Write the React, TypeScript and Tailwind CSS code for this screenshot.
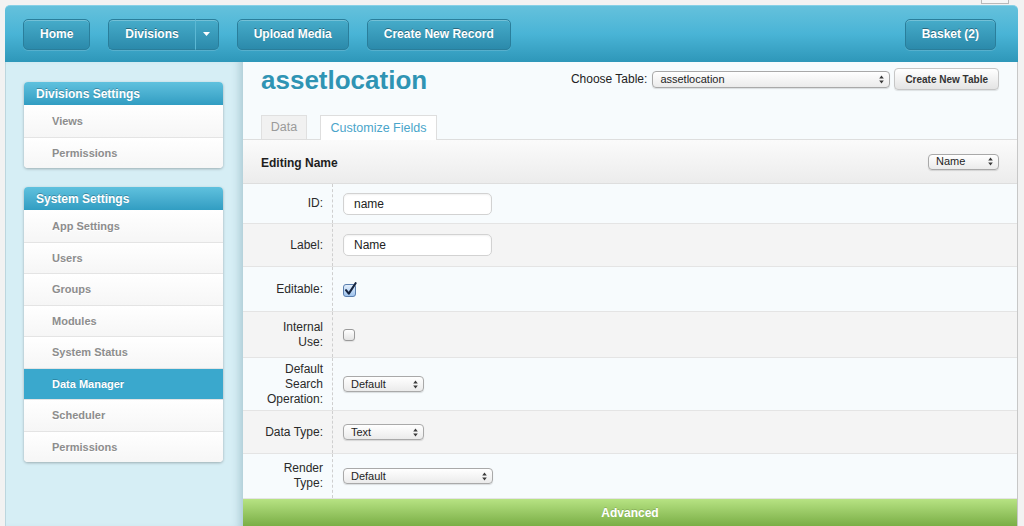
const sideGroups = [
  { title: "Divisions Settings", items: ["Views", "Permissions"] },
  {
    title: "System Settings",
    items: [
      "App Settings",
      "Users",
      "Groups",
      "Modules",
      "System Status",
      "Data Manager",
      "Scheduler",
      "Permissions",
    ],
  },
];

const btnBase =
  "flex h-[31px] items-center border border-[#2a7e9b] bg-linear-to-b from-[#46acca] to-[#2b8aab] text-[12px] font-bold text-white [text-shadow:0_-1px_0_rgba(0,0,0,0.35)] shadow-[inset_0_1px_0_rgba(255,255,255,0.25),0_1px_0_rgba(255,255,255,0.15)]";
const headerBtn = btnBase + " rounded-[5px] px-4";

function Arrows() {
  return (
    <svg width="5" height="9" viewBox="0 0 5 9">
      <path d="M2.5 0.5L4.8 3.6H0.2z M0.2 5.4H4.8L2.5 8.5z" fill="#3a3a3a" />
    </svg>
  );
}

function FakeSelect({ value, className }: { value: string; className: string }) {
  return (
    <div
      className={
        "flex items-center justify-between rounded-[4px] border border-[#a9a9a9] bg-linear-to-b from-white to-[#ebebeb] pl-[7px] pr-[5px] text-[11px] text-[#1e1e1e] shadow-[0_1px_1px_rgba(0,0,0,0.12)] " +
        className
      }
    >
      <span className="leading-none">{value}</span>
      <Arrows />
    </div>
  );
}

function TextBox({ value }: { value: string }) {
  return (
    <div className="flex h-[22px] w-[149px] items-center rounded-[5px] border border-[#d2d2d2] bg-white pl-[10px] text-[12px] text-[#222] shadow-[inset_0_1px_2px_rgba(0,0,0,0.06)]">
      {value}
    </div>
  );
}

function CheckedBox() {
  return (
    <svg width="15" height="15" viewBox="0 0 15 15">
      <defs>
        <linearGradient id="cbFill" x1="0" y1="0" x2="0" y2="1">
          <stop offset="0" stopColor="#e6f1fd" />
          <stop offset="1" stopColor="#9cc1ec" />
        </linearGradient>
      </defs>
      <rect x="0.5" y="2.5" width="12" height="12" rx="2.5" fill="url(#cbFill)" stroke="#5b7fae" />
      <path d="M3 8.2L5.8 11.6L12.6 1.2" stroke="#15243f" strokeWidth="2.1" fill="none" strokeLinecap="round" strokeLinejoin="round" />
    </svg>
  );
}

function EmptyBox() {
  return (
    <div className="h-[12px] w-[12px] rounded-[3px] border border-[#9a9a9a] bg-linear-to-b from-white to-[#e4e4e4] shadow-[0_1px_1px_rgba(0,0,0,0.08)]" />
  );
}

const rows = [
  { label: "ID:", h: "h-[40px]", bg: "bg-[#f7fbfd]", field: <TextBox value="name" /> },
  { label: "Label:", h: "h-[43px]", bg: "bg-[#f4f4f4]", field: <TextBox value="Name" /> },
  { label: "Editable:", h: "h-[45px]", bg: "bg-[#f7fbfd]", field: <CheckedBox /> },
  { label: "Internal Use:", h: "h-[46px]", bg: "bg-[#f4f4f4]", field: <EmptyBox /> },
  {
    label: "Default Search Operation:",
    h: "h-[53px]",
    bg: "bg-[#f7fbfd]",
    field: <FakeSelect value="Default" className="h-[16px] w-[81px]" />,
  },
  {
    label: "Data Type:",
    h: "h-[43px]",
    bg: "bg-[#f4f4f4]",
    field: <FakeSelect value="Text" className="h-[16px] w-[81px]" />,
  },
  {
    label: "Render Type:",
    h: "h-[45px]",
    bg: "bg-[#f7fbfd]",
    field: <FakeSelect value="Default" className="h-[16px] w-[150px]" />,
  },
];

export default function App() {
  return (
    <div className="h-[526px] overflow-hidden bg-[#f2f2f2] font-['Liberation_Sans',Arial,sans-serif]">
      <div className="flex h-[5px] justify-end pr-[15px]">
        <div className="h-[4px] w-[28px] border border-t-0 border-[#b9b9b9] bg-[#f7f7f7]" />
      </div>

      <div className="ml-[5px] flex h-[521px] w-[1013px] flex-col">
        {/* top bar */}
        <header className="flex h-[57px] items-center justify-between rounded-t-[5px] border-t border-[#86d0e6] bg-linear-to-b from-[#64c1dc] via-[#49b4d6] to-[#2e97b9] pl-[18px] pr-[22px]">
          <div className="flex items-center gap-[18px]">
            <button className={headerBtn}>Home</button>
            <div className="flex">
              <button className={btnBase + " rounded-l-[5px] border-r-[#5cb8d4] px-4"}>Divisions</button>
              <button className={btnBase + " w-[23px] justify-center rounded-r-[5px] border-l-0"}>
                <svg width="7" height="4" viewBox="0 0 7 4">
                  <path d="M0 0H7L3.5 4z" fill="#fff" />
                </svg>
              </button>
            </div>
            <button className={headerBtn}>Upload Media</button>
            <button className={headerBtn}>Create New Record</button>
          </div>
          <button className={headerBtn}>Basket (2)</button>
        </header>

        <div className="flex flex-1 overflow-hidden">
          {/* sidebar */}
          <aside className="flex w-[238px] flex-col gap-[19px] border-l border-[#bcd6de] bg-[#d6eef5] pt-[20px] pl-[18px] pr-[20px] shadow-[inset_-9px_0_8px_-6px_rgba(40,90,110,0.25)]">
            {sideGroups.map((g) => (
              <div key={g.title} className="overflow-hidden rounded-[4px] bg-white shadow-[0_1px_3px_rgba(0,0,0,0.28)]">
                <div className="flex h-[23px] items-center bg-linear-to-b from-[#5fc1de] to-[#319dc2] pl-[12px] text-[12px] font-bold text-white [text-shadow:0_-1px_0_rgba(0,0,0,0.25)]">
                  {g.title}
                </div>
                {g.items.map((item, i) => (
                  <div
                    key={item}
                    className={
                      "flex h-[31.5px] items-center pl-[28px] text-[11px] font-bold " +
                      (i > 0 ? "border-t border-[#e4e4e4] " : "") +
                      (item === "Data Manager"
                        ? "bg-[#3aa8cd] text-white [text-shadow:0_-1px_0_rgba(0,0,0,0.2)]"
                        : "bg-linear-to-b from-white to-[#f6f6f6] text-[#8d8d8d] [text-shadow:0_1px_0_#fff]")
                    }
                  >
                    {item}
                  </div>
                ))}
              </div>
            ))}
          </aside>

          {/* main */}
          <main className="flex flex-1 flex-col border-r border-[#c7c7c7] bg-[#f7fbfd]">
            <div className="flex h-[53px] items-start justify-between px-[18px]">
              <h1 className="mt-[3px] text-[26px] leading-[30px] font-bold text-[#2f94b4] [text-shadow:0_1px_0_#fff]">
                assetlocation
              </h1>
              <div className="mt-[6px] flex items-center gap-[4px]">
                <span className="mr-[1px] text-[12px] text-[#222]">Choose Table:</span>
                <FakeSelect value="assetlocation" className="h-[17px] w-[238px]" />
                <button className="h-[22px] rounded-[4px] border border-[#c6c6c6] bg-linear-to-b from-white to-[#e4e4e4] px-[10px] text-[10px] font-bold text-[#333] shadow-[0_1px_1px_rgba(0,0,0,0.1)]">
                  Create New Table
                </button>
              </div>
            </div>

            <div className="flex h-[24px] items-end gap-[13px] pl-[18px]">
              <div className="flex h-[24px] w-[46px] items-center justify-center border border-b-0 border-[#e0e0e0] bg-[#f1f1f1] text-[12.5px] text-[#9a9a9a]">
                Data
              </div>
              <div className="relative z-10 -mb-px flex h-[25px] w-[117px] items-center justify-center border border-b-0 border-[#dedede] bg-white text-[12.5px] text-[#4aa5ca]">
                Customize Fields
              </div>
            </div>

            <div className="flex h-[45px] items-center justify-between border-y border-[#dedede] bg-linear-to-b from-[#fbfbfb] to-[#ececec] px-[18px]">
              <span className="mt-[3px] text-[12px] font-bold text-[#1e1e1e]">Editing Name</span>
              <FakeSelect value="Name" className="h-[16px] w-[71px]" />
            </div>

            {rows.map((r) => (
              <div key={r.label} className={"flex border-b border-[#e4e4e4] " + r.h + " " + r.bg}>
                <div className="flex w-[90px] items-center justify-end border-r border-dashed border-[#cfcfcf] pr-[9px] pl-[19px] text-right text-[12px] leading-[15px] text-[#2a2a2a]">
                  {r.label}
                </div>
                <div className="flex items-center pl-[10px]">{r.field}</div>
              </div>
            ))}

            <div className="flex flex-1 items-center justify-center bg-linear-to-b from-[#b7e383] to-[#7aae45] text-[12px] font-bold text-white [text-shadow:0_-1px_0_rgba(0,0,0,0.15)]">
              Advanced
            </div>
          </main>
        </div>
      </div>
    </div>
  );
}
